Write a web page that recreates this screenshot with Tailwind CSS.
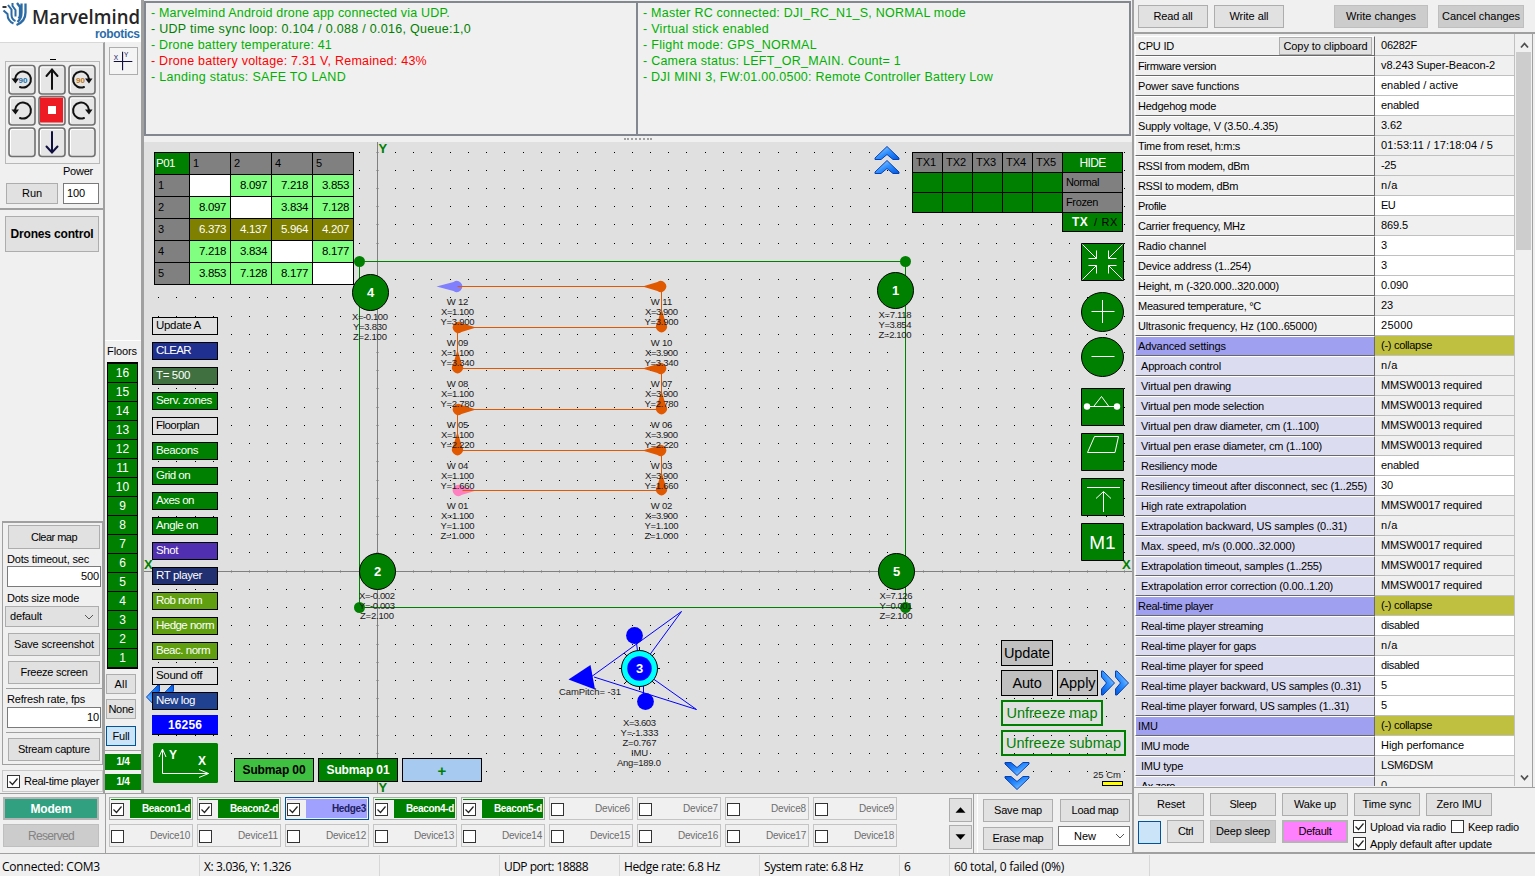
<!DOCTYPE html>
<html lang="en">
<head>
<meta charset="utf-8">
<title>Marvelmind Dashboard</title>
<script src="https://cdn.jsdelivr.net/npm/@tailwindcss/browser@4"></script>
</head>
<body class="flex h-[876px] w-[1535px] flex-col overflow-hidden bg-[#f0f0f0] font-['Liberation_Sans',Arial,sans-serif] text-[11px] leading-none whitespace-nowrap text-black">
<div class="flex h-[853px]">

  <!-- left and centre -->
  <div class="flex w-[1132px] flex-col">
    <div class="flex h-[793px]">

      <!-- logo and tool columns -->
      <div class="flex w-[144px] flex-col border-r-3 border-[#a0a0a0]">
        <svg class="h-[42px] w-[141px] shrink-0 bg-white" viewBox="0 0 141 42">
          <path d="M2.500 7h4" fill="none" stroke="#222" stroke-width="1.800"/>
          <path d="M3.500 10.500l4 3.500q0 7 6 9.500M8 5l3.500 4.500v5q0 5 4 6.500M12.500 3v3l3 4v6.500" fill="none" stroke="#2a6aa5" stroke-width="2"/>
          <path d="M17 3l3 4v8q0 2-1.500 3.500M21.500 3.500v9q0 6-4 9.500M25.500 3.500v9q0 9-9 12.500" fill="none" stroke="#2a6aa5" stroke-width="2.300"/>
          <text x="32" y="24" textLength="108" lengthAdjust="spacingAndGlyphs" class="fill-[#262626] font-['Open_Sans',sans-serif] text-[19.500px] font-semibold">Marvelmind</text>
          <text x="95" y="38" textLength="45" class="fill-[#2a6caa] text-[12px] font-bold">robotics</text>
        </svg>
        <div class="flex flex-1">
          <div class="flex w-[105px] flex-col border-t border-r-2 border-t-[#d8d8d8] border-r-[#a0a0a0]">
            <div class="h-[18px] pt-[10px] pl-[3px] text-center text-[11px]"><div class="mx-auto mt-[6px] h-px w-[6px] bg-black"></div></div>
            <svg class="ml-[5px] h-[103px] w-[95px] shrink-0" viewBox="5 61 95 103">
              <rect x="5.500" y="61.500" width="94" height="102" fill="#f0f0f0" stroke="#b8b8b8"/>
              <g id="pad"></g>
              <rect x="40" y="97.500" width="23" height="25" fill="#ed1c24"/>
              <rect x="48" y="106" width="8" height="8" fill="#fff"/>
              <g fill="none" stroke="#111" stroke-width="2" stroke-linecap="round">
                <path d="M52 89V70M46.500 76l5.500-6.500 5.500 6.500"/>
                <path d="M52 132v20M46.500 146.500l5.500 6 5.500-6" stroke="#101040"/>
                <path d="M15 79a8 8 0 1 1 5 8"/><path d="M89 79a8 8 0 1 0-5 8"/>
                <path d="M15 110a8 8 0 1 1 5 8"/><path d="M89 110a8 8 0 1 0-5 8"/>
              </g>
              <path d="M11.500 78.500h7.500l-3.500 5zM11.500 109.500h7.500l-3.500 5zM85 78.500h7.500l-3.500 5zM85 109.500h7.500l-3.500 5z" fill="#111"/>
              <text x="18.500" y="82.500" class="fill-[#1c70a8] text-[8px] font-bold">90</text>
              <text x="76" y="82.500" class="fill-[#c07820] text-[8px] font-bold">90</text>
            </svg>
            <div class="flex h-[46px] flex-wrap gap-x-[6px] border-b-2 border-[#a0a0a0] pl-[6px]">
              <div class="h-[15px] w-[93px] pt-[2px] pl-[57px]"><span data-w="30">Power</span></div>
              <div class="flex h-[21px] w-[52px] items-center justify-center border border-[#adadad] bg-[#e1e1e1]"><span data-w="20">Run</span></div>
              <div class="-ml-px flex h-[21px] w-[36px] items-center border border-[#7a7a7a] bg-white pl-[3px]"><span data-w="18">100</span></div>
            </div>
            <div class="mt-[6px] ml-[5px] flex h-[36px] w-[94px] items-center justify-center border border-[#adadad] bg-[#e1e1e1] text-[12px] font-bold"><span data-w="83">Drones control</span></div>
            <div class="mt-[269px] ml-[2px] flex h-[244px] w-[101px] flex-col border border-[#a0a0a0] border-t-2 pl-[3px]">
              <div class="mt-[2px] ml-[2px] flex h-[24px] w-[92px] items-center justify-center border border-[#adadad] bg-[#e1e1e1]"><span data-w="46">Clear map</span></div>
              <div class="mt-[5px] ml-[1px] h-[12px]"><span data-w="82">Dots timeout, sec</span></div>
              <div class="flex h-[21px] w-[94px] ml-[1px] items-center justify-end border border-[#7a7a7a] bg-white pr-px"><span data-w="18">500</span></div>
              <div class="mt-[6px] ml-[1px] h-[13px]"><span data-w="72">Dots size mode</span></div>
              <div class="-ml-px flex h-[21px] w-[94px] items-center justify-between border border-[#adadad] bg-[#e1e1e1] px-[4px]"><span data-w="32">default</span><svg class="h-[6px] w-[10px]" viewBox="0 0 10 6"><path d="M1 1l4 4 4-4" fill="none" stroke="#555"/></svg></div>
              <div class="mt-[6px] ml-[2px] flex h-[23px] w-[92px] items-center justify-center border border-[#adadad] bg-[#e1e1e1]"><span data-w="80">Save screenshot</span></div>
              <div class="mt-[5px] ml-[2px] flex h-[23px] w-[92px] items-center justify-center border border-[#adadad] bg-[#e1e1e1]"><span data-w="67">Freeze screen</span></div>
              <div class="mt-[4px] h-px w-[96px] bg-[#a0a0a0]"></div>
              <div class="mt-[5px] ml-[1px] h-[13px]"><span data-w="78">Refresh rate, fps</span></div>
              <div class="ml-[1px] flex h-[21px] w-[94px] items-center justify-end border border-[#7a7a7a] bg-white pr-px"><span data-w="12">10</span></div>
              <div class="mt-[4px] h-px w-[96px] shrink-0 bg-[#a0a0a0]"></div>
              <div class="mt-[5px] ml-[2px] flex h-[23px] w-[92px] shrink-0 items-center justify-center border border-[#adadad] bg-[#e1e1e1]"><span data-w="72">Stream capture</span></div>
            </div>
            <div class="mt-[5px] ml-[2px] flex h-[22px] w-[101px] items-center gap-[4px] border border-[#c8c8c8] pl-[4px]"><svg class="size-[13px]" viewBox="0 0 13 13"><rect x=".5" y=".5" width="12" height="12" fill="#fff" stroke="#333"/><path d="M2.500 6.500l3 3 5-6" fill="none" stroke="#222" stroke-width="1.200"/></svg><span data-w="75">Real-time player</span></div>
          </div>
          <div class="flex w-[36px] flex-col">
            <svg class="mt-[5px] ml-[4px] h-[28px] w-[29px] border border-[#adadad] bg-[#f4f4f4]" viewBox="0 0 29 28"><path d="M4 14.500h20M13.500 4v20" stroke="#101040" stroke-width="1.200"/><text x="4" y="13" class="fill-[#101060] text-[7px]">X</text><text x="15" y="10" class="fill-[#101060] text-[7px]">Y</text></svg>
            <div class="mt-[265px] h-[22px] border-t border-white pt-[5px] pl-[2px]"><span data-w="30">Floors</span></div>
            <div id="floors" class="ml-[2px] flex w-[31px] flex-col border border-t-2 border-black bg-black text-[12px] text-white"></div>
            <div class="mt-[5px] ml-px flex h-[20px] w-[30px] items-center justify-center border border-[#adadad] bg-[#e1e1e1]"><span data-w="13">All</span></div>
            <div class="mt-[5px] ml-px flex h-[20px] w-[30px] items-center justify-center border border-[#adadad] bg-[#e1e1e1]"><span data-w="25">None</span></div>
            <div class="mt-[7px] ml-px flex h-[20px] w-[30px] items-center justify-center border border-[#005499] bg-[#cce4f7]"><span data-w="17">Full</span></div>
            <div class="mt-[4px] flex flex-col gap-[4px] border-t border-[#a0a0a0] pt-[3px] text-[10px] font-bold text-white">
              <div class="flex h-[16px] items-center justify-center bg-[#008000]"><span data-w="13">1/4</span></div>
              <div class="flex h-[16px] items-center justify-center bg-[#008000]"><span data-w="13">1/4</span></div>
            </div>
          </div>
        </div>
      </div>

      <!-- logs and map -->
      <div class="flex w-[988px] flex-col">
        <div class="mt-px flex h-[135px] w-[987px] border-2 border-[#828790] text-[12.500px] text-[#00b000]">
          <div class="w-[492px] border-r-2 border-[#828790] pt-[2px] pl-[5px] leading-[16px]">
            <div><span data-w="299">- Marvelmind Android drone app connected via UDP.</span></div>
            <div class="text-[#008000]"><span data-w="320">- UDP time sync loop: 0.104 / 0.088 / 0.016, Queue:1,0</span></div>
            <div><span data-w="181">- Drone battery temperature: 41</span></div>
            <div class="text-[#ff0000]"><span data-w="276">- Drone battery voltage: 7.31 V, Remained: 43%</span></div>
            <div><span data-w="195">- Landing status: SAFE TO LAND</span></div>
          </div>
          <div class="pt-[2px] pl-[5px] leading-[16px]">
            <div><span data-w="323">- Master RC connected: DJI_RC_N1_S, NORMAL mode</span></div>
            <div><span data-w="126">- Virtual stick enabled</span></div>
            <div><span data-w="174">- Flight mode: GPS_NORMAL</span></div>
            <div><span data-w="258">- Camera status: LEFT_OR_MAIN. Count= 1</span></div>
            <div><span data-w="350">- DJI MINI 3, FW:01.00.0500: Remote Controller Battery Low</span></div>
          </div>
        </div>
        <div class="flex h-[6px] items-center justify-center"><div class="w-[28px] border-t-2 border-dotted border-[#a0a0a0]"></div></div>

        <div class="relative h-[651px] bg-[#e0e0e0]">
          <svg class="absolute inset-0 h-[651px] w-[988px]" viewBox="144 142 988 651">
            <defs>
              <linearGradient id="bl" x1="0" y1="0" x2="1" y2="1"><stop offset="0" stop-color="#b8e0ff"/><stop offset=".5" stop-color="#2e90ff"/><stop offset="1" stop-color="#0058e0"/></linearGradient>
              <path id="chev" d="M0 12L12 .5 24 12v1.500h-6L12 8.500l-6 5H0z" fill="url(#bl)" stroke="#0840b0"/>
            </defs>
            <g id="dots" fill="#000" shape-rendering="crispEdges"></g>
            <path d="M144 571.500h988M377.500 142v651" stroke="#808080"/>
            <rect x="359.500" y="261.500" width="546" height="346" fill="none" stroke="#008000"/>
            <g fill="#008000"><circle cx="359.500" cy="261.500" r="5.500"/><circle cx="905.500" cy="261.500" r="5.500"/><circle cx="359.500" cy="607.500" r="5.500"/><circle cx="905.500" cy="607.500" r="5.500"/></g>
            <g class="fill-[#008000] text-[13px] font-bold"><text x="378.500" y="153">Y</text><text x="378.500" y="792">Y</text><text x="144" y="568.500">X</text><text x="1122" y="568.500">X</text></g>
            <g id="beacons"></g>
            <g id="way"></g>
            <g fill="none" stroke="#0000ff">
              <path d="M591 677L681.500 611.500 643 664M594 677L696.500 709.500 645 673M636.500 643l1 8M643.500 686v10"/>
            </g>
            <g fill="#0000ff"><path d="M568.500 679.500L590.500 665 595 689.500z"/><circle cx="634.500" cy="635.500" r="8.400"/><circle cx="645.500" cy="701.500" r="8.400"/></g>
            <path d="M619 668.500h41M639.500 647v43M624 653l31 31M655 653l-31 31" stroke="#000"/>
            <circle cx="639.500" cy="668.500" r="18" fill="#00ffff" stroke="#000"/><circle cx="639.500" cy="668.500" r="12.200" fill="#0000ff"/>
            <text x="639.500" y="673" text-anchor="middle" class="fill-white text-[13px] font-bold">3</text>
            <g class="text-[9.500px]" text-anchor="middle" fill="#202020">
              <text x="590" y="695" textLength="62">CamPitch= -31</text>
              <text x="639.500" y="726" textLength="33">X=3.603</text><text x="639.500" y="736" textLength="38">Y=-1.333</text><text x="639.500" y="746" textLength="34">Z=0.767</text><text x="639.500" y="756" textLength="17">IMU</text><text x="639" y="766" textLength="44">Ang=189.0</text>
              <text x="1107" y="778" textLength="28">25 Cm</text>
            </g>
            <rect x="1102.500" y="781.500" width="20" height="4" fill="#ffff00" stroke="#000"/>
            <use href="#chev" x="875" y="146"/><use href="#chev" x="875" y="160"/>
            <g transform="translate(1115 671) rotate(90)"><use href="#chev" x="0" y="0"/><use href="#chev" x="0" y="-14"/></g>
            <g transform="translate(1029 790) rotate(180)"><use href="#chev" x="0" y="0"/><use href="#chev" x="0" y="14"/></g>
            <g transform="translate(146 709) rotate(-90)"><use href="#chev" x="0" y="0"/><use href="#chev" x="0" y="14"/></g>
            <g fill="#008000" stroke="#000">
              <path d="M1081.500 243.500h42v37h-42zM1081.500 388.500h42v37h-42zM1081.500 433.500h42v37h-42zM1081.500 478.500h42v37h-42zM1081.500 523.500h42v37h-42z"/>
              <ellipse cx="1102.500" cy="312" rx="21" ry="19.500"/><ellipse cx="1102.500" cy="357" rx="21" ry="19.500"/>
              <rect x="153" y="743" width="65" height="40" rx="1.500" stroke="none"/>
            </g>
            <g fill="none" stroke="#fff">
              <path d="M1082.500 244.500l14 14v-8M1096.500 258.500h-8M1122.500 244.500l-14 14v-8M1108.500 258.500h8M1082.500 279.500l14-14v8M1096.500 265.500h-8M1122.500 279.500l-14-14v8M1108.500 265.500h8"/>
              <path d="M1091.500 311.500h23M1102.500 300v23M1091.500 356.500h23M1087 406.500h30M1094 406l7.500-9.500 7 9.500M1094.500 436.500h24l-3.500 16h-27.500zM1087 487.500h33M1103.500 492v20M1096 498.500l7.500-7 7.500 7"/>
              <path d="M162.500 749v24.500h46M159 757l3.500-8 3.500 8M199 769.500l9.500 4-9.500 4"/>
            </g>
            <circle cx="1087" cy="406.500" r="3.200" fill="#fff"/><circle cx="1117" cy="406.500" r="3.200" fill="#fff"/>
            <text x="1102.500" y="548.500" text-anchor="middle" class="fill-white text-[19px]">M1</text>
            <g class="fill-white text-[12px] font-bold"><text x="169" y="759">Y</text><text x="198" y="765">X</text></g>
          </svg>

          <div id="dist" class="absolute top-[10px] left-[10px] grid w-[200px] grid-cols-[34px_repeat(4,40px)] gap-px border border-black bg-black text-[11.500px]"></div>

          <div class="absolute top-[10px] left-[768px] flex w-[211px] items-start">
            <div class="grid grid-cols-[repeat(5,29px)] grid-rows-[19px_19px_19px] gap-px border border-black bg-black" id="tx"></div>
            <div class="-ml-px flex w-[61px] flex-col gap-px border border-black bg-black">
              <div class="flex h-[19px] items-center justify-center bg-[#008000] text-[12px] text-white"><span data-w="26">HIDE</span></div>
              <div class="flex h-[19px] items-center bg-[#808080] pl-[3px]"><span data-w="33">Normal</span></div>
              <div class="flex h-[19px] items-center bg-[#808080] pl-[3px]"><span data-w="32">Frozen</span></div>
              <div class="flex h-[18px] items-center bg-[#008000] pl-[9px]"><span data-w="16" class="w-[22px] text-[12px] font-bold text-white">TX</span><span data-w="24">/ RX</span></div>
            </div>
          </div>

          <div id="tools" class="absolute top-[175px] left-[8px] flex w-[66px] flex-col gap-[7px] text-[11.500px]"></div>
          <div class="absolute top-[573px] left-[8px] flex h-[20px] w-[66px] items-center justify-center border-b border-black bg-[#0000ff] text-[12px] font-bold text-white"><span data-w="34">16256</span></div>

          <div class="absolute top-[616px] left-[90px] flex gap-[4px] text-[12px] font-bold">
            <div class="flex h-[24px] w-[80px] items-center justify-center border border-black bg-[#40c040]"><span data-w="63">Submap 00</span></div>
            <div class="flex h-[24px] w-[80px] items-center justify-center border border-black bg-[#008000] text-white"><span data-w="63">Submap 01</span></div>
            <div class="flex h-[24px] w-[80px] items-center justify-center border border-black bg-[#a6caf0] text-[15px] text-[#008000]">+</div>
          </div>

          <div class="absolute top-[498px] left-[857px] flex w-[126px] flex-wrap gap-x-[4px] gap-y-[4px] text-[14.500px]">
            <div class="mr-[60px] flex h-[26px] w-[52px] items-center justify-center border border-black bg-[#c0c0c0]"><span data-w="46">Update</span></div>
            <div class="flex h-[26px] w-[52px] items-center justify-center border border-black bg-[#c0c0c0]"><span data-w="29">Auto</span></div>
            <div class="flex h-[26px] w-[41px] items-center justify-center border border-black bg-[#c0c0c0]"><span data-w="36">Apply</span></div>
            <div class="flex h-[26px] w-[102px] items-center justify-center border-2 border-[#008000] text-[#008000]"><span data-w="91">Unfreeze map</span></div>
            <div class="flex h-[26px] w-[125px] items-center justify-center border-2 border-[#008000] text-[#008000]"><span data-w="115">Unfreeze submap</span></div>
          </div>
        </div>
      </div>
    </div>

    <!-- devices strip -->
    <div class="flex h-[60px] border-t border-[#a0a0a0]">
      <div class="flex w-[106px] flex-col gap-[4px] border-r border-[#a0a0a0] pt-[3px] pl-[3px]">
        <div class="flex h-[23px] w-[96px] items-center justify-center border-2 border-[#b4b4b4] bg-[#30a080] text-[12px] font-bold text-white"><span data-w="41">Modem</span></div>
        <div class="flex h-[23px] w-[96px] items-center justify-center border border-[#bfbfbf] bg-[#cccccc] text-[12px] text-[#838383]"><span data-w="46">Reserved</span></div>
      </div>
      <div id="devices" class="grid w-[843px] grid-cols-[repeat(9,84px)] grid-rows-[23px_23px] content-start gap-x-[4px] gap-y-[4px] pt-[3px] pl-[3px]"></div>
      <div class="flex w-[25px] flex-col gap-[3px] border-r border-[#a0a0a0] pt-[4px]">
        <svg class="h-[24px] w-[23px] border border-[#adadad] bg-[#e1e1e1]" viewBox="0 0 23 24"><path d="M6 15h11l-5.500-6z"/></svg>
        <svg class="h-[24px] w-[23px] border border-[#adadad] bg-[#e1e1e1]" viewBox="0 0 23 24"><path d="M6 9h11l-5.500 6z"/></svg>
      </div>
      <div class="ml-[3px] grid flex-1 grid-cols-[70px_72px] content-start gap-x-[6px] gap-y-[5px] border-l border-white pt-[5px] pl-[5px]">
        <div class="flex h-[23px] items-center justify-center border border-[#adadad] bg-[#e1e1e1]"><span data-w="48">Save map</span></div>
        <div class="ml-px flex h-[23px] w-[70px] items-center justify-center border border-[#adadad] bg-[#e1e1e1]"><span data-w="47">Load map</span></div>
        <div class="flex h-[23px] items-center justify-center border border-[#adadad] bg-[#e1e1e1]"><span data-w="51">Erase map</span></div>
        <div class="-mt-px -ml-px flex h-[20px] w-[72px] items-center justify-between border border-[#7a7a7a] bg-white pr-[4px] pl-[15px]"><span data-w="22">New</span><svg class="h-[6px] w-[10px]" viewBox="0 0 10 6"><path d="M1 1l4 4 4-4" fill="none" stroke="#555"/></svg></div>
      </div>
    </div>
  </div>

  <!-- settings panel -->
  <div class="flex w-[403px] flex-col border-l-2 border-[#a0a0a0]">
    <div class="flex h-[34px] items-start border-b-2 border-[#a0a0a0] pt-[5px] pl-[4px]">
      <div class="mr-[6px] flex h-[23px] w-[70px] items-center justify-center border border-[#adadad] bg-[#e1e1e1]"><span data-w="39">Read all</span></div>
      <div class="mr-[50px] flex h-[23px] w-[70px] items-center justify-center border border-[#adadad] bg-[#e1e1e1]"><span data-w="39">Write all</span></div>
      <div class="mr-[10px] flex h-[23px] w-[94px] items-center justify-center border border-[#bfbfbf] bg-[#cccccc]"><span data-w="70">Write changes</span></div>
      <div class="flex h-[23px] w-[86px] items-center justify-center border border-[#bfbfbf] bg-[#cccccc]"><span data-w="78">Cancel changes</span></div>
    </div>
    <div class="flex h-[754px] border-b border-[#a0a0a0]">
      <div class="flex h-[752px] w-[381px] flex-col overflow-hidden border-r border-[#c0c0c0] pt-[2px]" id="rows"></div>
      <div class="flex w-[17px] flex-col items-center justify-between">
        <svg class="h-[18px] w-[10px] shrink-0" viewBox="0 0 10 18"><path d="M2 13.500l3.500-4 3.500 4" fill="none" stroke="#505050" stroke-width="1.800"/></svg>
        <div class="h-[198px] w-[15px] bg-[#cdcdcd]"></div>
        <div class="flex-1"></div>
        <svg class="h-[18px] w-[10px] shrink-0" viewBox="0 0 10 18"><path d="M2 6.500l3.500 4 3.500-4" fill="none" stroke="#505050" stroke-width="1.800"/></svg>
      </div>
      <div class="w-px bg-[#a0a0a0]"></div>
    </div>
    <div class="flex flex-1 flex-col gap-[4px] border-b border-[#a0a0a0] pt-[5px] pl-[4px]">
      <div class="flex gap-[6px]">
        <div class="flex h-[23px] w-[66px] items-center justify-center border border-[#adadad] bg-[#e1e1e1]"><span data-w="28">Reset</span></div>
        <div class="flex h-[23px] w-[66px] items-center justify-center border border-[#adadad] bg-[#e1e1e1]"><span data-w="27">Sleep</span></div>
        <div class="flex h-[23px] w-[66px] items-center justify-center border border-[#adadad] bg-[#e1e1e1]"><span data-w="42">Wake up</span></div>
        <div class="flex h-[23px] w-[66px] items-center justify-center border border-[#adadad] bg-[#e1e1e1]"><span data-w="49">Time sync</span></div>
        <div class="flex h-[23px] w-[66px] items-center justify-center border border-[#adadad] bg-[#e1e1e1]"><span data-w="45">Zero IMU</span></div>
      </div>
      <div class="flex gap-[6px]">
        <div class="mt-px h-[23px] w-[23px] border border-[#005499] bg-[#cce4f7]"></div>
        <div class="flex h-[23px] w-[37px] items-center justify-center border border-[#adadad] bg-[#e1e1e1]"><span data-w="15">Ctrl</span></div>
        <div class="flex h-[23px] w-[66px] items-center justify-center border border-[#bfbfbf] bg-[#cccccc]"><span data-w="54">Deep sleep</span></div>
        <div class="flex h-[23px] w-[66px] items-center justify-center border-2 border-[#b4b4b4] bg-[#ff80ff]"><span data-w="33">Default</span></div>
        <div class="-ml-px flex w-[180px] flex-wrap gap-x-[4px] gap-y-[4px]">
          <svg class="size-[13px]" viewBox="0 0 13 13"><rect x=".5" y=".5" width="12" height="12" fill="#fff" stroke="#333"/><path d="M2.500 6.500l3 3 5-6" fill="none" stroke="#222" stroke-width="1.200"/></svg>
          <div class="w-[77px] pt-[2px]"><span data-w="76">Upload via radio</span></div>
          <svg class="size-[13px]" viewBox="0 0 13 13"><rect x=".5" y=".5" width="12" height="12" fill="#fff" stroke="#333"/></svg>
          <div class="w-[52px] pt-[2px]"><span data-w="51">Keep radio</span></div>
          <svg class="size-[13px]" viewBox="0 0 13 13"><rect x=".5" y=".5" width="12" height="12" fill="#fff" stroke="#333"/><path d="M2.500 6.500l3 3 5-6" fill="none" stroke="#222" stroke-width="1.200"/></svg>
          <div class="w-[130px] pt-[2px]"><span data-w="122">Apply default after update</span></div>
        </div>
      </div>
    </div>
  </div>
</div>

<!-- status bar -->
<div class="flex h-[23px] items-stretch border-t border-[#a0a0a0] pt-px font-['Open_Sans','Noto_Sans',sans-serif] text-[12px] leading-[24px]">
  <div class="w-[200px] border-r border-[#d7d7d7] pl-[2px]"><span data-w="98">Connected: COM3</span></div>
  <div class="w-[180px] border-r border-[#d7d7d7] pl-[4px]"><span data-w="87">X: 3.036, Y: 1.326</span></div>
  <div class="w-[120px] border-r border-[#d7d7d7]"></div>
  <div class="w-[120px] border-r border-[#d7d7d7] pl-[4px]"><span data-w="84">UDP port: 18888</span></div>
  <div class="w-[140px] border-r border-[#d7d7d7] pl-[4px]"><span data-w="96">Hedge rate: 6.8 Hz</span></div>
  <div class="w-[140px] border-r border-[#d7d7d7] pl-[4px]"><span data-w="99">System rate: 6.8 Hz</span></div>
  <div class="w-[50px] border-r border-[#d7d7d7] pl-[4px]">6</div>
  <div class="w-[200px] border-r border-[#d7d7d7] pl-[4px]"><span data-w="110">60 total, 0 failed (0%)</span></div>
</div>

<script>
const $ = id => document.getElementById(id);

// keypad buttons
let h = '';
for (const y of [65.5, 96.5, 128]) for (const x of [9, 39, 69])
  h += `<rect x="${x}" y="${y}" width="26" height="28.500" rx="3" fill="#e6e6e6" stroke="#707070" stroke-width="1.600"/><path d="M${x + 1.5} ${y + 26}v-23q0-1.500 1.500-1.500h21" fill="none" stroke="#fff"/>`;
$('pad').innerHTML = h;

// floors
h = '';
for (let i = 16; i > 0; i--) h += `<div class="flex h-[19px] items-center justify-center border-b border-black bg-[#008000]">${i}</div>`;
$('floors').innerHTML = h;

// grid dots
h = '';
for (let i = -12; i <= 41; i++) for (let j = -11; j <= 23; j++) {
  const x = 377 + Math.floor(i * 18.22 + .25), y = 571 - Math.ceil(j * 18.22 - .15);
  if (y > 142 && i && j) h += `<rect x="${x}" y="${y}" width="1" height="1"/>`;
  if (y > 142 && !i !== !j) h += `<path fill="#a8a8a8" d="M${x - (i ? 0 : 1)} ${y - (j ? 0 : 1)}h${i ? 1 : 3}v${j ? 1 : 3}h${i ? -1 : -3}z"/>`;
}
$('dots').innerHTML = h;

// beacons
h = '';
for (const [n, x, y, lx, ly, w, ...t] of [
  [4, 370.5, 292.5, 370, 320, 36, 'X=-0.100', 'Y=3.830', 'Z=2.100'],
  [1, 895.5, 290.5, 895, 318, 33, 'X=7.118', 'Y=3.854', 'Z=2.100'],
  [2, 377.5, 571.5, 377, 599, 36, 'X=-0.002', 'Y=-0.003', 'Z=2.100'],
  [5, 896.5, 571.5, 896, 599, 33, 'X=7.126', 'Y=0.001', 'Z=2.100']]) {
  h += `<circle cx="${x}" cy="${y}" r="18" fill="#008000" stroke="#000"/><text x="${x}" y="${y + 4.5}" text-anchor="middle" class="fill-white text-[13px] font-bold">${n}</text>`;
  t.forEach((s, i) => h += `<text x="${lx}" y="${ly + i * 10}" text-anchor="middle" textLength="${s.length > 7 ? 36 : w > 33 ? 34 : 33}" class="fill-[#202020] text-[9.500px]">${s}</text>`);
}
$('beacons').innerHTML = h;

// waypoint route
const L = 457.5, R = 661.5, Y = [286.5, 327.5, 368.5, 409.5, 450.5, 490.5];
const drop = (x, y, a, c, d) => `<path transform="translate(${x} ${y}) rotate(${a})" fill="${c}" d="M${d} 0L4 -4.500A5.500 5.500 0 1 0 4 4.500z"/>`;
const O = '#e05800';
h = '';
h += drop(L, Y[0], 180, '#8080ff', 21) + drop(R, Y[0], 180, O, 19) + drop(R, Y[1], -90, O, 18.5) + drop(L, Y[1], 0, O, 18.5)
  + drop(L, Y[2], -90, O, 18.5) + drop(R, Y[2], 180, O, 19) + drop(R, Y[3], -90, O, 18.5) + drop(L, Y[3], 0, O, 18.5)
  + drop(L, Y[4], -90, O, 18.5) + drop(R, Y[4], 180, O, 19) + drop(R, Y[5], -90, O, 18.5) + drop(L, Y[5], 0, '#ff80c0', 18.5);
h += `<path d="M${L + 5} ${Y[5]}H${R}V${Y[4]}H${L}V${Y[3]}H${R}V${Y[2]}H${L}V${Y[1]}H${R}V${Y[0]}H${L}" fill="none" stroke="${O}"/>`;
const ys = ['3.900', '3.340', '2.780', '2.220', '1.660', '1.100'];
[[L, '1.100', ['12', '09', '08', '05', '04', '01']], [R, '3.900', ['11', '10', '07', '06', '03', '02']]].forEach(([x, xv, ns]) => ns.forEach((n, i) => {
  const b = 305 + (i === 5 ? 204 : i * 41), t = (s, y, w) => `<text x="${x}" y="${y}" text-anchor="middle" textLength="${w}" class="fill-[#202020] text-[9.500px]">${s}</text>`;
  h += t('W ' + n, b, 21.5) + t('X=' + xv, b + 10, 33) + t('Y=' + ys[i], b + 20, 34);
  if (i === 5) h += t('Z=1.000', b + 30, 34);
}));
$('way').innerHTML = h;

// distance table
const D = [['P01', '1', '2', '4', '5'], ['1', '', '8.097', '7.218', '3.853'], ['2', '8.097', '', '3.834', '7.128'], ['3', '6.373', '4.137', '5.964', '4.207'], ['4', '7.218', '3.834', '', '8.177'], ['5', '3.853', '7.128', '8.177', '']];
h = '';
D.forEach((r, i) => r.forEach((v, j) => {
  if (!i && !j) h += `<div class="flex h-[21px] items-center bg-[#008000] pl-px text-white"><span data-w="19">${v}</span></div>`;
  else if (!i || !j) h += `<div class="flex h-[21px] items-center bg-[#808080] pl-[3px] text-[11px]">${v}</div>`;
  else if (!v) h += `<div class="h-[21px] bg-white"></div>`;
  else if (i === 3) h += `<div class="flex h-[21px] items-center justify-end bg-[#808000] pr-[4px] text-white"><span data-w="27">${v}</span></div>`;
  else h += `<div class="flex h-[21px] items-center justify-end bg-[#80ff80] pr-[4px]"><span data-w="27">${v}</span></div>`;
}));
$('dist').innerHTML = h;

// transmit table
h = '';
for (let i = 1; i <= 5; i++) h += `<div class="flex items-center bg-[#808080] pl-[3px]"><span data-w="20">TX${i}</span></div>`;
for (let i = 0; i < 10; i++) h += `<div class="bg-[#008000]"></div>`;
$('tx').innerHTML = h;

// map tool buttons
h = '';
for (const [t, w, c] of [
  ['Update A', 45, 'bg-[#e0e0e0]'], ['CLEAR', 35, 'bg-[#203090] text-white'], ['T= 500', 34, 'bg-[#407040] text-white'], ['Serv. zones', 56, 'bg-[#008000] text-white'],
  ['Floorplan', 43, 'bg-[#e0e0e0]'], ['Beacons', 42, 'bg-[#008000] text-white'], ['Grid on', 34, 'bg-[#008000] text-white'], ['Axes on', 38, 'bg-[#008000] text-white'],
  ['Angle on', 42, 'bg-[#008000] text-white'], ['Shot', 22, 'bg-[#5030b0] text-white'], ['RT player', 46, 'bg-[#203070] text-white'], ['Rob norm', 46, 'bg-[#60a010] text-white'],
  ['Hedge norm', 58, 'bg-[#60a010] text-white'], ['Beac. norm', 54, 'bg-[#60a010] text-white'], ['Sound off', 46, 'bg-[#e0e0e0]'], ['New log', 39, 'bg-[#204090] text-white']])
  h += `<div class="flex h-[18px] items-center border border-black pl-[3px] ${c}"><span data-w="${w}">${t}</span></div>`;
$('tools').innerHTML = h;

// devices
const on = { 1: 'Beacon1-d', 2: 'Beacon2-d', 3: 'Hedge3', 4: 'Beacon4-d', 5: 'Beacon5-d' };
h = '';
for (let i = 1; i <= 18; i++) {
  const s = on[i];
  const frame = i === 3 ? 'border-[#005499]' : s ? 'border-[#adadad]' : 'border-[#c4c4c4]';
  const fill = i === 3 ? 'bg-[#a0a0ff] font-bold text-[#202060]' : s ? 'bg-[#008000] font-bold text-white' : 'bg-[#f0f0f0] text-[#6d6d6d]';
  const top = i === 3 ? 'border-t-[#a0a0ff]' : s ? 'border-t-[#008000]' : 'border-t-[#f0f0f0]';
  h += `<div class="flex border ${frame} p-px"><div class="flex flex-1 items-stretch border-t ${top}"><div class="w-[19px] pt-[3px]"><svg class="size-[13px]" viewBox="0 0 13 13"><rect x=".5" y=".5" width="12" height="12" fill="#fff" stroke="#333"/>${s ? '<path d="M2.500 6.500l3 3 5-6" fill="none" stroke="#222" stroke-width="1.200"/>' : ''}</svg></div><div class="flex flex-1 items-center justify-end pr-px pb-px text-[10px] ${fill}"><span data-w="${s ? (i === 3 ? 34 : 48) : i > 9 ? 40 : 35}">${s || 'Device' + i}</span></div></div></div>`;
}
$('devices').innerHTML = h;

// settings rows: kind (p plain, s sub-item, g group), label, width, value, width, editable
const M = ['MMSW0013 required', 101, 0], N = ['MMSW0017 required', 101, 0], C = ['(-) collapse', 51, 0], NA = ['n/a', 17, 0];
h = '';
[['p', 'CPU ID', 36, '06282F', 36, 0], ['p', 'Firmware version', 78, 'v8.243 Super-Beacon-2', 114, 0], ['p', 'Power save functions', 101, 'enabled / active', 77, 1], ['p', 'Hedgehog mode', 78, 'enabled', 38, 1],
['p', 'Supply voltage, V (3.50..4.35)', 140, '3.62', 21, 0], ['p', 'Time from reset, h:m:s', 102, '01:53:11 / 17:18:04 / 5', 112, 0], ['p', 'RSSI from modem, dBm', 111, '-25', 15, 0], ['p', 'RSSI to modem, dBm', 100, ...NA],
['p', 'Profile', 28, 'EU', 14, 1], ['p', 'Carrier frequency, MHz', 107, '869.5', 27, 0], ['p', 'Radio channel', 68, '3', 6, 1], ['p', 'Device address (1..254)', 113, '3', 6, 1], ['p', 'Height, m (-320.000..320.000)', 141, '0.090', 27, 1],
['p', 'Measured temperature, °C', 123, '23', 12, 0], ['p', 'Ultrasonic frequency, Hz (100..65000)', 179, '25000', 32, 1], ['g', 'Advanced settings', 88, ...C], ['s', 'Approach control', 80, ...NA],
['s', 'Virtual pen drawing', 90, ...M], ['s', 'Virtual pen mode selection', 123, ...M], ['s', 'Virtual pen draw diameter, cm (1..100)', 178, ...M], ['s', 'Virtual pen erase diameter, cm (1..100)', 181, ...M],
['s', 'Resiliency mode', 76, 'enabled', 38, 1], ['s', 'Resiliency timeout after disconnect, sec (1..255)', 226, '30', 12, 1], ['s', 'High rate extrapolation', 105, ...N], ['s', 'Extrapolation backward, US samples (0..31)', 206, ...NA],
['s', 'Max. speed, m/s (0.000..32.000)', 154, ...N], ['s', 'Extrapolation timeout, samples (1..255)', 181, ...N], ['s', 'Extrapolation error correction (0.00..1.20)', 192, ...N], ['g', 'Real-time player', 75, ...C],
['s', 'Real-time player streaming', 122, 'disabled', 38, 1], ['s', 'Real-time player for gaps', 115, ...NA], ['s', 'Real-time player for speed', 122, 'disabled', 38, 1], ['s', 'Real-time player backward, US samples (0..31)', 220, '5', 6, 1],
['s', 'Real-time player forward, US samples (1..31)', 208, '5', 6, 1], ['g', 'IMU', 20, ...C], ['s', 'IMU mode', 48, 'High perfomance', 83, 1], ['s', 'IMU type', 42, 'LSM6DSM', 52, 0], ['s', 'Ax zero', 34, '0', 6, 0]
].forEach(([k, l, lw, v, vw, e], i) => {
  const a = k === 'g' ? 'bg-[#a0a0f0] pl-[2px]' : k === 's' ? 'bg-[#dcdcf0] pl-[5px]' : 'bg-[#f0f0f0] pl-[2px]';
  const b = k === 'g' ? 'bg-[#c0c040]' : e ? 'bg-white' : 'bg-[#f0f0f0]';
  h += `<div class="flex h-[20px] shrink-0 pl-px"><div class="flex w-[240px] items-center justify-between border-t border-r border-b border-l border-t-white border-r-[#696969] border-b-[#696969] border-l-white ${a}"><span data-w="${lw}">${l}</span>${i ? '' : '<div class="mr-[2px] flex h-[18px] w-[93px] items-center justify-center border border-[#adadad] bg-[#e1e1e1]"><span data-w="84">Copy to clipboard</span></div>'}</div><div class="flex flex-1 items-center border-b border-[#c0c0c0] pl-[6px] ${b}"><span data-w="${vw}">${v}</span></div></div>`;
});
$('rows').innerHTML = h;

// fit each label to its nominal width through letter spacing, once styles are in place
function fit() {
  document.querySelectorAll('[data-w]').forEach(el => {
    el.style.letterSpacing = '0px';
    const r = document.createRange(); r.selectNodeContents(el);
    el.style.letterSpacing = ((+el.dataset.w - r.getBoundingClientRect().width) / el.textContent.length).toFixed(3) + 'px';
  });
}
fit();
addEventListener('load', () => { fit(); requestAnimationFrame(fit); setTimeout(fit, 60); });
new ResizeObserver(fit).observe($('rows').firstElementChild);
</script>
</body>
</html>
